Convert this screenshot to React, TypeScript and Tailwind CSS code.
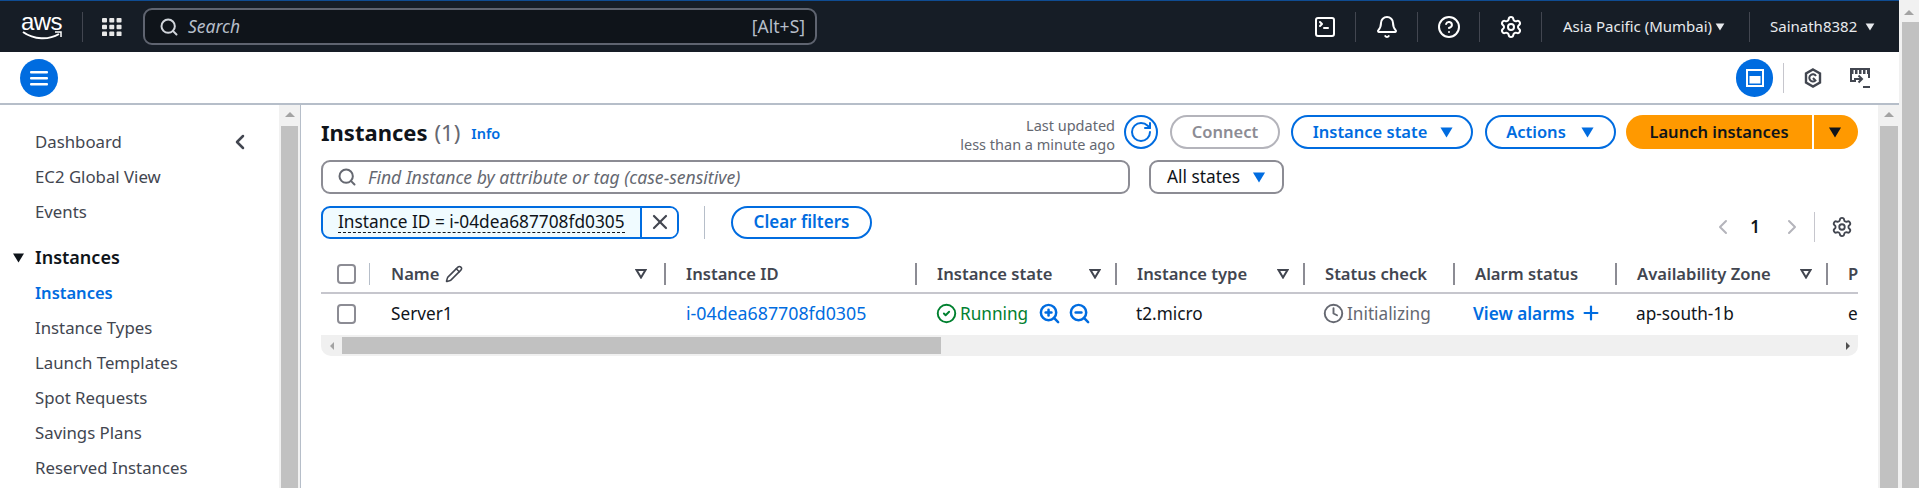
import React from 'react';
import {
  Search,
  Bell,
  CircleHelp,
  Settings,
  SquareTerminal,
  Pencil,
  ZoomIn,
  ZoomOut,
  CircleCheck,
  Clock,
  Plus,
  X,
  ChevronLeft,
  ChevronRight,
  RotateCw,
} from 'lucide-react';

const Caret = ({ className }: { className: string }) => (
  <svg viewBox="0 0 12 10" className={className} fill="currentColor">
    <path d="M0.5 0.5h11L6 9.5z" />
  </svg>
);

const FilterCaret = () => (
  <svg viewBox="0 0 12 10" className="w-[12px] h-[10px] text-[#424650]" fill="none" stroke="currentColor" strokeWidth="2">
    <path d="M1.5 1h9L6 8.5z" />
  </svg>
);

const ThinDivider = () => <div className="w-[2px] h-[22px] shrink-0 bg-[#8c8c94]" />;

const NavDivider = () => <div className="w-px h-[30px] shrink-0 bg-[#424650]" />;

const ScrollUp = () => (
  <div className="h-[18px] flex items-center justify-center">
    <div className="w-0 h-0 border-x-[5px] border-x-transparent border-b-[5px] border-b-[#a3a3a3]" />
  </div>
);

const sideLinks = ['Instance Types', 'Launch Templates', 'Spot Requests', 'Savings Plans', 'Reserved Instances'];

const columns = [
  { label: 'Instance ID', width: 'w-[249px]', filter: false },
  { label: 'Instance state', width: 'w-[198px]', filter: true },
  { label: 'Instance type', width: 'w-[186px]', filter: true },
  { label: 'Status check', width: 'w-[148px]', filter: false },
  { label: 'Alarm status', width: 'w-[160px]', filter: false },
  { label: 'Availability Zone', width: 'w-[209px]', filter: true },
];

function TopNav() {
  const iconCell = 'w-[61px] flex justify-center shrink-0';
  return (
    <div className="h-[52px] shrink-0 bg-[#161d26] border-t border-[#0f4c92] flex items-center text-white">
      <div className="w-[82px] flex flex-col items-center pl-[1px] shrink-0">
        <span className="text-[24px] leading-[18px] tracking-[-0.5px] font-['Liberation_Sans',sans-serif]">aws</span>
        <svg viewBox="0 0 40 10" className="w-[40px] h-[10px]" fill="none">
          <path d="M1 1c11 8 26 8 36 2" stroke="white" strokeWidth="2" />
          <path d="M33 1h6v5" stroke="white" strokeWidth="1.5" />
        </svg>
      </div>
      <NavDivider />
      <svg viewBox="0 0 22 20" className="w-[20px] h-[20px] ml-[19px] shrink-0" fill="#e8e8e8">
        {[0, 8, 16].map(x =>
          [0, 7.5, 15].map(y => <rect key={`${x}-${y}`} x={x} y={y} width="5.5" height="5" rx="1" />),
        )}
      </svg>
      <div className="ml-[21px] w-[674px] h-[37px] shrink-0 bg-[#0f141a] border-2 border-[#5f6470] rounded-[9px] flex items-center pl-[14px] pr-[10px] text-[#b6bec9]">
        <Search size={20} strokeWidth={2.4} className="text-[#d1d5db]" />
        <span className="ml-[9px] italic text-[17.5px]">Search</span>
        <span className="ml-auto text-[17.5px]">[Alt+S]</span>
      </div>
      <div className="ml-auto flex items-center h-full whitespace-nowrap">
        <div className={iconCell}><SquareTerminal size={24} strokeWidth={2} /></div>
        <NavDivider />
        <div className={iconCell}><Bell size={24} strokeWidth={2} /></div>
        <NavDivider />
        <div className={iconCell}><CircleHelp size={24} strokeWidth={2} /></div>
        <NavDivider />
        <div className={iconCell}><Settings size={24} strokeWidth={2} /></div>
        <NavDivider />
        <div className="w-[207px] shrink-0 pl-[21px] flex items-center">
          <span className="text-[15px] text-[#e8eaed]">Asia Pacific (Mumbai)</span>
          <Caret className="w-[10px] h-[8px] ml-auto mr-[24px] text-[#e8eaed]" />
        </div>
        <NavDivider />
        <div className="w-[149px] shrink-0 pl-[20px] pr-[24px] flex items-center">
          <span className="text-[15px] text-[#e8eaed]">Sainath8382</span>
          <Caret className="w-[10px] h-[8px] ml-auto text-[#e8eaed]" />
        </div>
      </div>
    </div>
  );
}

function SubNav() {
  return (
    <div className="h-[53px] shrink-0 bg-white border-b-[2px] border-[#b6bec9] flex items-center pl-[20px]">
      <div className="w-[38px] h-[38px] rounded-full bg-[#006ce0] flex items-center justify-center">
        <svg viewBox="0 0 18 16" className="w-[18px] h-[16px]" fill="white">
          <rect y="1" width="18" height="2.4" rx="1" />
          <rect y="7" width="18" height="2.4" rx="1" />
          <rect y="13" width="18" height="2.4" rx="1" />
        </svg>
      </div>
      <div className="ml-auto flex items-center mr-[29px]">
        <div className="w-[37px] h-[38px] rounded-full bg-[#006ce0] flex items-center justify-center">
          <svg viewBox="0 0 18 18" className="w-[18px] h-[18px]" fill="none">
            <rect x="1" y="1" width="16" height="16" stroke="white" strokeWidth="2" />
            <rect x="3.5" y="7" width="11" height="7.5" fill="white" />
          </svg>
        </div>
        <div className="w-px h-[30px] bg-[#c6c6cd] ml-[10px]" />
        <svg viewBox="0 0 18 20" className="w-[18px] h-[20px] ml-[20px] text-[#424650]" fill="none" stroke="currentColor" strokeWidth="2.4">
          <path d="M9 1.5l7 4v9l-7 4-7-4v-9z" />
          <path d="M12 8a3.6 3.6 0 1 0-.6 4.5L9 10" strokeWidth="2" />
        </svg>
        <svg viewBox="0 0 20 20" className="w-[20px] h-[20px] ml-[28px] text-[#424650]" fill="none" stroke="currentColor" strokeWidth="2">
          <path d="M6 13H1V1h18v9" />
          <path d="M1 4h18" strokeWidth="4" strokeDasharray="2.5 1.5" />
          <path d="M4 11h8M8.5 7.5L12 11l-3.5 3.5" />
          <path d="M13 19h7" />
        </svg>
      </div>
    </div>
  );
}

function Sidebar() {
  const link = 'text-[16.8px] leading-[35px] text-[#424650]';
  return (
    <div className="w-[301px] shrink-0 flex border-r border-[#b6bec9]">
      <div className="w-[279px] shrink-0 pl-[35px] pt-[19px]">
        <div className="flex items-center justify-between pr-[27px]">
          <span className={link}>Dashboard</span>
          <ChevronLeft size={24} strokeWidth={2.5} className="text-[#424650]" />
        </div>
        <div className={link}>EC2 Global View</div>
        <div className={link}>Events</div>
        <div className="flex items-center -ml-[23px] mt-[11px] h-[35px]">
          <Caret className="w-[13px] h-[10px] text-[#0f141a]" />
          <span className="ml-[10px] text-[18px] font-semibold text-[#0f141a]">Instances</span>
        </div>
        <div className="text-[16.5px] leading-[35px] font-semibold text-[#006ce0]">Instances</div>
        {sideLinks.map(l => (
          <div key={l} className={link}>{l}</div>
        ))}
      </div>
      <div className="w-[21px] shrink-0 bg-[#f1f1f1] flex flex-col pl-[2px] pr-[2px]">
        <div className="h-[21px] flex justify-center">
          <ScrollUp />
        </div>
        <div className="flex-1 bg-[#c1c1c1]" />
      </div>
    </div>
  );
}

function Toolbar() {
  const blueBtn = 'h-[34px] border-2 border-[#006ce0] rounded-full flex items-center justify-center text-[16.5px] font-semibold text-[#006ce0]';
  return (
    <div className="flex items-center h-[34px] mt-[10px]">
      <span className="text-[22px] font-bold text-[#0f141a]">Instances</span>
      <span className="ml-[7px] text-[22px] text-[#656871]">(1)</span>
      <span className="ml-[11px] mt-[4px] text-[14.5px] font-semibold text-[#006ce0]">Info</span>
      <div className="ml-auto mt-[6px] text-right text-[14.5px] leading-[19px] text-[#656871]">
        <div>Last updated</div>
        <div>less than a minute ago</div>
      </div>
      <div className="ml-[9px] w-[34px] h-[34px] border-2 border-[#006ce0] rounded-full flex items-center justify-center text-[#006ce0]">
        <RotateCw size={24} strokeWidth={2} />
      </div>
      <div className="ml-[12px] w-[110px] h-[34px] border-2 border-[#b4b4bb] rounded-full flex items-center justify-center text-[16.5px] font-semibold text-[#8c8c94]">
        Connect
      </div>
      <div className={`ml-[11px] w-[182px] gap-[12px] pl-[3px] ${blueBtn}`}>
        Instance state
        <Caret className="w-[15px] h-[11px]" />
      </div>
      <div className={`ml-[12px] w-[131px] gap-[14px] ${blueBtn}`}>
        Actions
        <Caret className="w-[15px] h-[11px]" />
      </div>
      <div className="ml-[10px] w-[232px] h-[34px] bg-[#ff9900] rounded-full flex items-center text-[16.5px] font-semibold text-[#0f141a]">
        <span className="w-[186px] text-center">Launch instances</span>
        <div className="w-[2px] h-full bg-white" />
        <div className="flex-1 flex justify-center pr-[3px]">
          <Caret className="w-[14px] h-[11px]" />
        </div>
      </div>
    </div>
  );
}

function FilterRow() {
  return (
    <div className="flex items-center mt-[11px] h-[34px]">
      <div className="w-[809px] h-[34px] border-2 border-[#8c8c94] rounded-[9px] flex items-center pl-[14px] text-[#656871]">
        <Search size={20} strokeWidth={2.4} />
        <span className="ml-[11px] italic text-[17.6px]">Find Instance by attribute or tag (case-sensitive)</span>
      </div>
      <div className="ml-[19px] w-[135px] h-[34px] border-2 border-[#8c8c94] rounded-[9px] flex items-center justify-center gap-[12px] text-[17.3px] text-[#0f141a]">
        All states
        <Caret className="w-[14px] h-[11px] text-[#006ce0]" />
      </div>
    </div>
  );
}

function ChipRow() {
  return (
    <div className="flex items-center mt-[11px] h-[34px]">
      <div className="w-[358px] h-[33px] border-2 border-[#006ce0] rounded-[9px] bg-[#f0fbff] flex items-center overflow-hidden">
        <span className="pl-[15px] w-[317px] text-[17.3px] text-[#0f141a] whitespace-nowrap">
          <span className="border-b border-dashed border-[#0f141a] leading-[20px] inline-block">Instance ID = i-04dea687708fd0305</span>
        </span>
        <div className="flex-1 h-full bg-white border-l-2 border-[#006ce0] flex items-center justify-center">
          <X size={24} strokeWidth={2.2} className="text-[#424650]" />
        </div>
      </div>
      <div className="ml-[25px] w-px h-[33px] bg-[#b6bec9]" />
      <div className="ml-[26px] w-[141px] h-[33px] border-2 border-[#006ce0] rounded-full flex items-center justify-center text-[17px] font-semibold text-[#006ce0]">
        Clear filters
      </div>
      <div className="ml-auto flex items-center mt-[9px] mr-[5px] text-[#b4b4bb]">
        <ChevronLeft size={24} strokeWidth={2} />
        <span className="ml-[15px] text-[17px] font-semibold text-[#0f141a]">1</span>
        <ChevronRight size={24} strokeWidth={2} className="ml-[20px]" />
        <div className="ml-[10px] w-px h-[30px] bg-[#c6c6cd]" />
        <Settings size={22} strokeWidth={2} className="ml-[16px] text-[#424650]" />
      </div>
    </div>
  );
}

function InstanceTable() {
  const headCell = 'flex items-center h-full pl-[20px] pr-[14px] text-[16.6px] font-semibold text-[#424650] shrink-0';
  const bodyCell = 'flex items-center pl-[20px] text-[17.2px] shrink-0 whitespace-nowrap';
  return (
    <div className="mt-[14px] overflow-hidden">
      <div className="flex items-center h-[41px] pt-[3px] border-b-2 border-[#c6c6cd]">
        <div className="w-[49px] shrink-0 flex items-center h-full pl-[16px]">
          <div className="w-[19px] h-[20px] border-2 border-[#8c8c94] rounded-[4px]" />
          <div className="ml-[13px] w-px h-[22px] bg-[#b6bec9]" />
        </div>
        <div className="w-[294px] shrink-0 flex items-center h-full pl-[21px] pr-[17px] text-[16.6px] font-semibold text-[#424650]">
          Name
          <Pencil size={18} strokeWidth={2} className="ml-[5px]" />
          <span className="ml-auto"><FilterCaret /></span>
        </div>
        <ThinDivider />
        {columns.map(c => (
          <React.Fragment key={c.label}>
            <div className={`${c.width} ${headCell}`}>
              {c.label}
              {c.filter && <span className="ml-auto"><FilterCaret /></span>}
            </div>
            <ThinDivider />
          </React.Fragment>
        ))}
        <div className={headCell}>Platform</div>
      </div>
      <div className="flex items-center h-[41px] pb-[2px] text-[#0f141a]">
        <div className="w-[48px] shrink-0 pl-[16px]">
          <div className="w-[19px] h-[20px] border-2 border-[#8c8c94] rounded-[4px]" />
        </div>
        <div className="w-[297px] shrink-0 pl-[22px] text-[17.2px]">Server1</div>
        <div className={`w-[250px] ${bodyCell} text-[17.8px] text-[#006ce0]`}>i-04dea687708fd0305</div>
        <div className={`w-[200px] ${bodyCell}`}>
          <CircleCheck size={21} strokeWidth={2.2} className="text-[#00802f]" />
          <span className="ml-[3px] text-[#00802f]">Running</span>
          <ZoomIn size={23} strokeWidth={2.6} className="ml-[10px] text-[#006ce0]" />
          <ZoomOut size={23} strokeWidth={2.6} className="ml-[7px] text-[#006ce0]" />
        </div>
        <div className={`w-[187px] ${bodyCell}`}>t2.micro</div>
        <div className={`w-[150px] ${bodyCell} text-[#656871]`}>
          <Clock size={21} strokeWidth={2.2} />
          <span className="ml-[3px]">Initializing</span>
        </div>
        <div className={`w-[163px] ${bodyCell} text-[#006ce0] font-semibold`}>
          View alarms
          <Plus size={22} strokeWidth={2.4} className="ml-[5px]" />
        </div>
        <div className={`w-[212px] ${bodyCell}`}>ap-south-1b</div>
        <div className={bodyCell}>ebs</div>
      </div>
      <div className="h-[21px] bg-[#f0f0f0] rounded-b-[10px] flex items-center">
        <div className="w-[21px] flex justify-center">
          <div className="w-0 h-0 border-y-[4px] border-y-transparent border-r-[4px] border-r-[#a3a3a3]" />
        </div>
        <div className="w-[599px] h-[17px] bg-[#c1c1c1]" />
        <div className="ml-auto w-[21px] flex justify-center">
          <div className="w-0 h-0 border-y-[4px] border-y-transparent border-l-[4px] border-l-[#505050]" />
        </div>
      </div>
    </div>
  );
}

export default function App() {
  return (
    <div className="w-[1919px] h-[488px] flex overflow-hidden bg-white font-['Noto_Sans',sans-serif]">
      <div className="w-[1899px] shrink-0 flex flex-col">
        <TopNav />
        <SubNav />
        <div className="flex-1 flex min-h-0">
          <Sidebar />
          <div className="flex-1 min-w-0 pl-[20px] pr-[20px] whitespace-nowrap">
            <Toolbar />
            <FilterRow />
            <ChipRow />
            <InstanceTable />
          </div>
          <div className="w-[21px] shrink-0 bg-[#f1f1f1] flex flex-col pl-[2px] pr-px">
            <div className="h-[21px] flex justify-center">
              <ScrollUp />
            </div>
            <div className="flex-1 bg-[#c1c1c1]" />
          </div>
        </div>
      </div>
      <div className="flex-1 bg-[#f1f1f1] flex flex-col">
        <div className="h-[22px] pt-[3px]">
          <ScrollUp />
        </div>
        <div className="flex-1 bg-[#c1c1c1] ml-[3px]" />
      </div>
    </div>
  );
}
